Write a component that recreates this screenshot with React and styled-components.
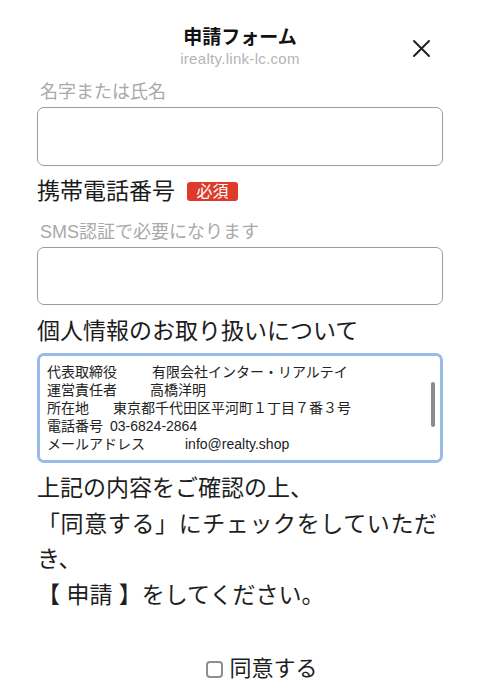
import React from "react";
import styled, { createGlobalStyle } from "styled-components";

const GlobalStyle = createGlobalStyle`
  html, body {
    margin: 0;
    padding: 0;
    background: #ffffff;
  }
  body {
    font-family: "Liberation Sans", "Noto Sans CJK JP", sans-serif;
    color: #1e1e1e;
    -webkit-font-smoothing: antialiased;
  }
  * { box-sizing: border-box; }
`;

const Page = styled.div`
  display: flex;
  flex-direction: column;
  padding: 26px 47px 20px 37px;
  width: 490px;
`;

const Header = styled.header`
  display: grid;
  grid-template-columns: 1fr auto 1fr;
  align-items: center;
`;

const TitleBlock = styled.div`
  grid-column: 2;
  display: flex;
  flex-direction: column;
  align-items: center;
`;

const Title = styled.h1`
  margin: 0;
  font-size: 19px;
  line-height: 24px;
  font-weight: 700;
  color: #111;
`;

const Subtitle = styled.div`
  margin-top: 1px;
  font-size: 15px;
  line-height: 16px;
  letter-spacing: 0.3px;
  color: #b4b4b4;
`;

const CloseButton = styled.button`
  grid-column: 3;
  justify-self: end;
  margin: 4px 12px 0 0;
  padding: 0;
  border: none;
  background: none;
  width: 19px;
  height: 19px;
  display: flex;
  align-items: center;
  justify-content: center;
  color: #222;
`;

const FieldLabel = styled.label`
  display: block;
  margin-top: ${(p) => p.$top}px;
  padding-left: 3px;
  font-size: 18px;
  line-height: 24px;
  color: #a9a9a9;
`;

const TextInput = styled.input`
  display: block;
  margin-top: 3px;
  width: 100%;
  height: ${(p) => p.$h}px;
  border: 1.5px solid #9c9c9c;
  border-radius: 7px;
  background: #fff;
  font-size: 18px;
  padding: 0 10px;
  outline: none;
`;

const SectionHeading = styled.h2`
  display: flex;
  align-items: center;
  margin: ${(p) => p.$top}px 0 0;
  font-size: 23px;
  line-height: 30px;
  font-weight: 400;
  color: #1c1c1c;
`;

const RequiredBadge = styled.span`
  display: inline-flex;
  align-items: center;
  justify-content: center;
  margin-left: 12px;
  width: 51px;
  height: 19px;
  border-radius: 3px;
  background: #dd3a2c;
  color: #fff;
  font-size: 16px;
  line-height: 19px;
`;

const InfoBox = styled.div`
  position: relative;
  margin-top: 7px;
  height: 110px;
  border: 3px solid #97bce9;
  border-radius: 7px;
  padding: 7px 6px 0 7px;
  overflow: hidden;
  background: #fff;
`;

const InfoRow = styled.div`
  display: flex;
  font-size: 14px;
  line-height: 18px;
  color: #222;
  white-space: nowrap;
`;

const InfoValue = styled.span`
  margin-left: ${(p) => p.$gap}px;
`;

const ScrollThumb = styled.div`
  position: absolute;
  right: 5px;
  top: 26px;
  width: 4px;
  height: 45px;
  border-radius: 2px;
  background: #8c8c8c;
`;

const Notice = styled.div`
  margin-top: 8px;
  width: 400px;
  font-size: 23px;
  line-height: 35.5px;
  color: #1e1e1e;
`;

const NoticeLine = styled.div`
  white-space: nowrap;
  text-align: ${(p) => (p.$stretch ? "justify" : "left")};
  text-align-last: ${(p) => (p.$stretch ? "justify" : "auto")};
`;

const AgreeRow = styled.label`
  display: flex;
  align-items: center;
  justify-content: center;
  margin-top: 41px;
  padding-left: 44px;
  font-size: 22px;
  line-height: 30px;
  color: #1e1e1e;
`;

const AgreeBox = styled.input`
  appearance: none;
  -webkit-appearance: none;
  margin: 0 6px 0 0;
  width: 17px;
  height: 17px;
  border: 2px solid #8e8e8e;
  border-radius: 4px;
  background: #fff;
`;

const infoRows = [
  { label: "代表取締役", value: "有限会社インター・リアルテイ", gap: 35 },
  { label: "運営責任者", value: "高橋洋明", gap: 33 },
  { label: "所在地", value: "東京都千代田区平河町１丁目７番３号", gap: 24 },
  { label: "電話番号", value: "03-6824-2864", gap: 7 },
  { label: "メールアドレス", value: "info@realty.shop", gap: 40 },
];

const noticeLines = [
  { text: "上記の内容をご確認の上、" },
  { text: "「同意する」にチェックをしていただ", stretch: true },
  { text: "き、" },
  { text: "【 申請 】をしてください。" },
];

export default function App() {
  return (
    <>
      <GlobalStyle />
      <Page>
        <Header>
          <TitleBlock>
            <Title>申請フォーム</Title>
            <Subtitle>irealty.link-lc.com</Subtitle>
          </TitleBlock>
          <CloseButton aria-label="閉じる">
            <svg width="19" height="19" viewBox="0 0 19 19" fill="none">
              <path d="M2 2L17 17M17 2L2 17" stroke="#222" strokeWidth="2" strokeLinecap="round" />
            </svg>
          </CloseButton>
        </Header>

        <FieldLabel $top={13}>名字または氏名</FieldLabel>
        <TextInput type="text" $h={59} />

        <SectionHeading $top={10}>
          携帯電話番号<RequiredBadge>必須</RequiredBadge>
        </SectionHeading>
        <FieldLabel $top={14}>SMS認証で必要になります</FieldLabel>
        <TextInput type="tel" $h={58} />

        <SectionHeading $top={11}>個人情報のお取り扱いについて</SectionHeading>
        <InfoBox>
          {infoRows.map((r) => (
            <InfoRow key={r.label}>
              <span>{r.label}</span>
              <InfoValue $gap={r.gap}>{r.value}</InfoValue>
            </InfoRow>
          ))}
          <ScrollThumb />
        </InfoBox>

        <Notice>
          {noticeLines.map((l) => (
            <NoticeLine key={l.text} $stretch={l.stretch}>
              {l.text}
            </NoticeLine>
          ))}
        </Notice>

        <AgreeRow>
          <AgreeBox type="checkbox" />
          同意する
        </AgreeRow>
      </Page>
    </>
  );
}
